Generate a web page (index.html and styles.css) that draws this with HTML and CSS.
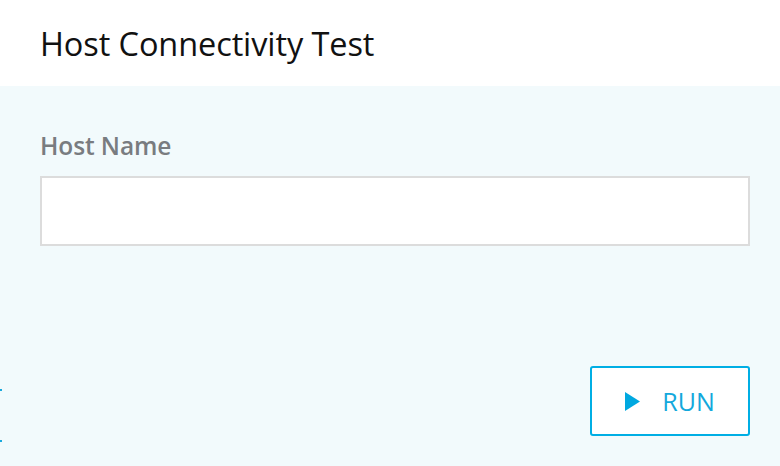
FILE: index.html
```html
<!DOCTYPE html>
<html>
<head>
<meta charset="utf-8">
<link rel="stylesheet" href="styles.css">
</head>
<body>
<div class="page">
  <header class="header">
    <h1 class="title">Host Connectivity Test</h1>
  </header>
  <main class="panel">
    <span class="edge edge-top"></span>
    <span class="edge edge-bottom"></span>
    <label class="label" for="host">Host Name</label>
    <input class="input" id="host" type="text">
    <div class="actions">
      <button class="run" type="button">
        <svg class="play" width="15" height="19" viewBox="0 0 15 19"><polygon points="0,0 15,9.5 0,19" fill="#00a8e0"/></svg>
        <span>RUN</span>
      </button>
    </div>
  </main>
</div>
</body>
</html>
```
FILE: styles.css
```css
* { box-sizing: border-box; }
html, body { margin: 0; padding: 0; }
body {
  width: 780px;
  height: 466px;
  overflow: hidden;
  font-family: "Open Sans", "Noto Sans", sans-serif;
  background: #f2fafc;
}
.page { display: flex; flex-direction: column; height: 466px; }
.header {
  background: #ffffff;
  height: 86px;
  padding: 0 41px 0 40px;
  display: flex;
  align-items: center;
}
.title {
  margin: 0;
  font-weight: 400;
  font-size: 32.5px;
  color: #111111;
  letter-spacing: -0.1px;
}
.panel {
  position: relative;
  flex: 1;
  background: #f2fafc;
  padding: 44px 30px 0 40px;
  display: flex;
  flex-direction: column;
}
.label {
  font-size: 24.5px;
  font-weight: 600;
  color: #797c80;
  margin-left: 0;
  line-height: 32px;
  letter-spacing: -0.1px;
}
.input {
  margin-top: 14px;
  height: 70px;
  width: 710px;
  border: 2px solid #dcdcdc;
  background: #ffffff;
  outline: none;
}
.actions {
  display: flex;
  justify-content: flex-end;
  margin-top: 120px;
}
.run {
  width: 160px;
  height: 70px;
  border: 2px solid #00aee4;
  border-radius: 3px;
  background: #ffffff;
  color: #13a8dc;
  font-family: "Open Sans", sans-serif;
  font-size: 25px;
  display: flex;
  align-items: center;
  justify-content: center;
  gap: 22px;
  padding: 0;
}
.edge {
  position: absolute;
  left: 0;
  width: 2px;
  height: 2px;
  background: #19a9dd;
}
.edge-top { top: 303px; }
.edge-bottom { top: 354px; }
```
